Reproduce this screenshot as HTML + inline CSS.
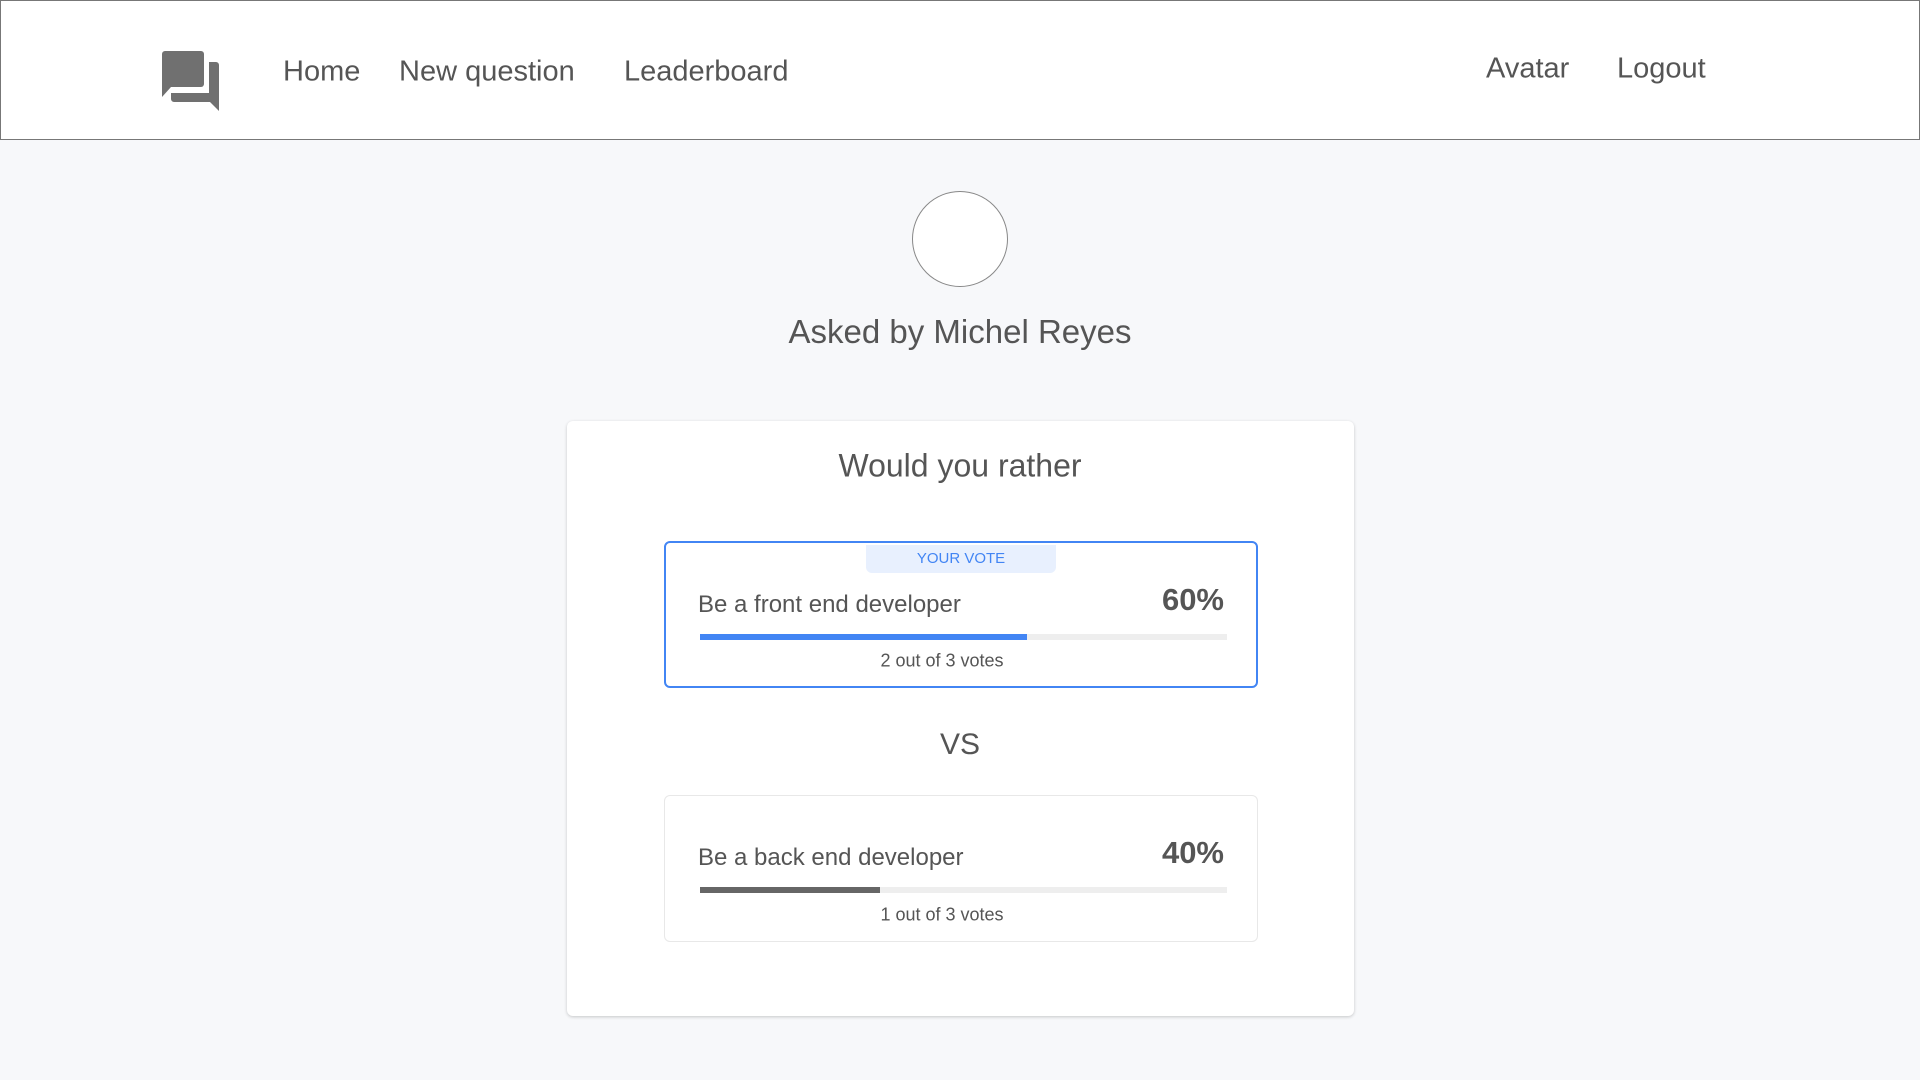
<!DOCTYPE html>
<html><head><meta charset="utf-8"><style>
*{margin:0;padding:0;box-sizing:border-box}
body{width:1920px;height:1080px;background:#f7f8fa;font-family:"Liberation Sans",sans-serif;color:#555;position:relative;overflow:hidden}
.hdr{position:absolute;left:0;top:0;width:1920px;height:140px;background:#fff;border:1px solid #777}
.a{position:absolute;white-space:nowrap}
.nav{font-size:29px;color:#555;transform:translateY(-50%)}
.c{transform:translate(-50%,-50%)}
.card{position:absolute;left:567px;top:421px;width:787px;height:595px;background:#fff;border-radius:6px;box-shadow:0 1px 3px rgba(0,0,0,.2)}
.opt{position:absolute;left:664px;width:594px;height:147px;background:#fff;border-radius:6px}
.bar{position:absolute;left:700px;width:527px;height:6px;background:#eee}
</style></head><body>
<div class="hdr"></div>
<svg class="a" style="left:161px;top:51px" width="60" height="60" viewBox="0 0 60 60">
<rect x="1" y="0" width="42" height="36" rx="3" fill="#707070"/>
<polygon points="1,30 1,46 10,36" fill="#707070"/>
<path d="M48 11 h7 a3 3 0 0 1 3 3 v46 l-9 -9 h-36 a3 3 0 0 1 -3 -3 v-6 h38 z" fill="#707070"/>
</svg>
<div class="a nav" style="left:283px;top:72px">Home</div>
<div class="a nav" style="left:399px;top:72px">New question</div>
<div class="a nav" style="left:624px;top:72px">Leaderboard</div>
<div class="a nav" style="left:1486px;top:69px">Avatar</div>
<div class="a nav" style="left:1617px;top:69px">Logout</div>
<div class="a" style="left:912px;top:191px;width:96px;height:96px;border-radius:50%;border:1px solid #888;background:#fff"></div>
<div class="a c" style="left:960px;top:332px;font-size:33px">Asked by Michel Reyes</div>
<div class="card"></div>
<div class="a c" style="left:960px;top:466px;font-size:32px">Would you rather</div>
<div class="opt" style="top:541px;border:2px solid #4285f4"></div>
<div class="a" style="left:866px;top:545px;width:190px;height:28px;background:#e8f0fe;border-radius:0 0 6px 6px;color:#4285f4;font-size:15px;text-align:center;line-height:28px">YOUR VOTE</div>
<div class="a" style="left:698px;top:605px;font-size:24px;transform:translateY(-50%)">Be a front end developer</div>
<div class="a" style="right:696px;top:600px;font-size:31px;font-weight:bold;transform:translateY(-50%)">60%</div>
<div class="bar" style="top:634px"><div style="width:327px;height:6px;background:#4285f4"></div></div>
<div class="a c" style="left:942px;top:661px;font-size:18px">2 out of 3 votes</div>
<div class="a c" style="left:960px;top:745px;font-size:30px">VS</div>
<div class="opt" style="top:795px;border:1px solid #e8e8e8"></div>
<div class="a" style="left:698px;top:858px;font-size:24px;transform:translateY(-50%)">Be a back end developer</div>
<div class="a" style="right:696px;top:853px;font-size:31px;font-weight:bold;transform:translateY(-50%)">40%</div>
<div class="bar" style="top:887px"><div style="width:180px;height:6px;background:#666"></div></div>
<div class="a c" style="left:942px;top:915px;font-size:18px">1 out of 3 votes</div>
</body></html>
